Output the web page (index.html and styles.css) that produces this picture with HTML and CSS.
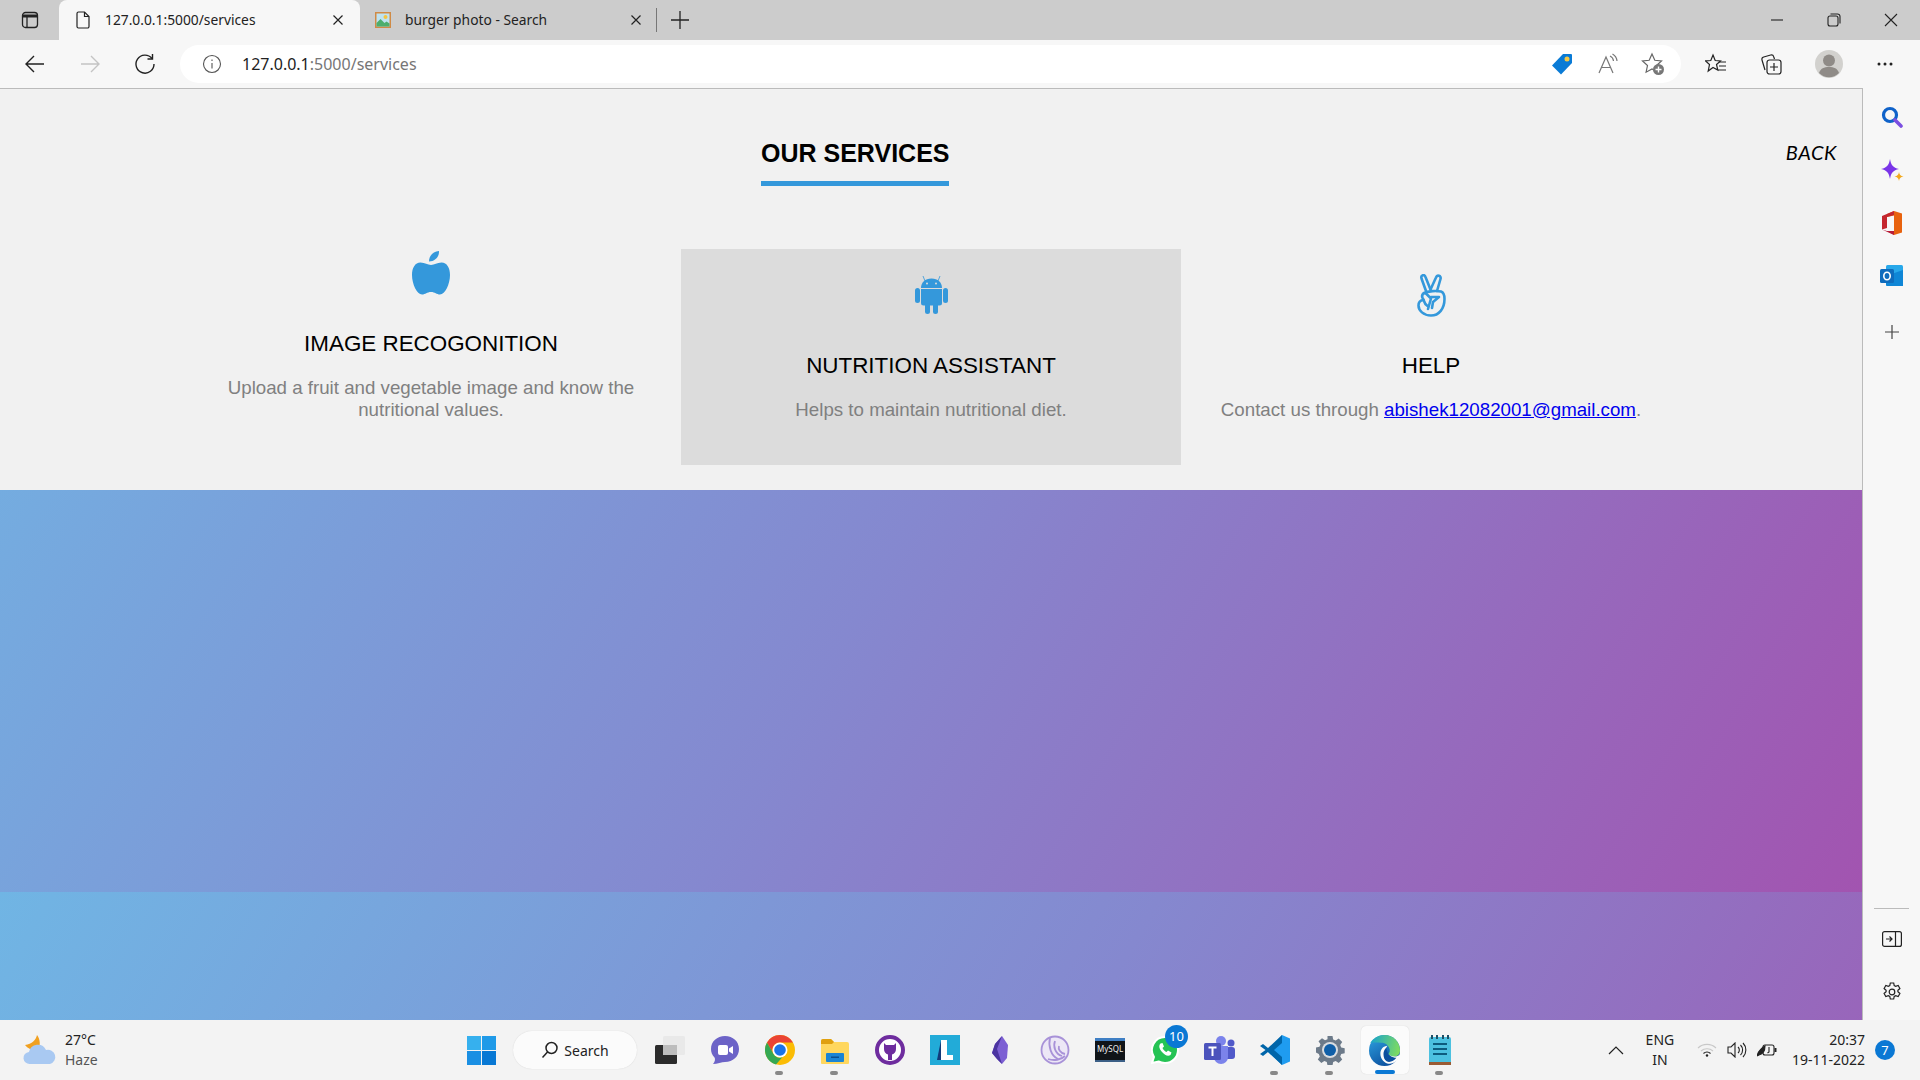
FILE: index.html
```html
<!DOCTYPE html>
<html lang="en">
<head>
    <meta charset="UTF-8">
    <meta name="viewport" content="width=device-width, initial-scale=1.0">
    <title>Our Services</title>
    <link rel="stylesheet" href="styles.css">
</head>
<body>
    <!-- tab strip -->
    <div class="tabstrip">
        <div class="tab-toggle">
            <svg width="18" height="18" viewBox="0 0 18 18" fill="none" stroke="#222" stroke-width="1.3"><rect x="1.5" y="1.5" width="15" height="15" rx="3"/><path d="M1.5 5h15" stroke-width="3"/><path d="M6 5v11"/></svg>
        </div>
        <div class="tab tab-active">
            <svg class="tab-icon" width="16" height="18" viewBox="0 0 16 18" fill="none" stroke="#222" stroke-width="1.2"><path d="M2 2.5a1.5 1.5 0 0 1 1.5-1.5h6L14 5.5v10a1.5 1.5 0 0 1-1.5 1.500h-9A1.5 1.5 0 0 1 2 15.500z"/><path d="M9.5 1v4.500H14"/></svg>
            <span class="tab-title">127.0.0.1:5000/services</span>
            <svg class="tab-close" width="12" height="12" viewBox="0 0 12 12" stroke="#222" stroke-width="1.2"><path d="M1.5 1.5l9 9M10.500 1.500l-9 9"/></svg>
        </div>
        <div class="tab">
            <svg class="tab-icon" width="18" height="18" viewBox="0 0 18 18"><rect x="1" y="1" width="16" height="16" fill="#d08a45"/><rect x="2.5" y="2.5" width="13" height="13" fill="#bfe3f2"/><circle cx="11.500" cy="6" r="2" fill="#f4c542"/><path d="M2.500 12l4-4 4 4 2-1.500 3 2v3h-13z" fill="#4cae6d"/></svg>
            <span class="tab-title">burger photo - Search</span>
            <svg class="tab-close" width="12" height="12" viewBox="0 0 12 12" stroke="#222" stroke-width="1.2"><path d="M1.500 1.500l9 9M10.500 1.500l-9 9"/></svg>
        </div>
        <div class="tab-sep"></div>
        <svg class="tab-new" width="18" height="18" viewBox="0 0 18 18" stroke="#222" stroke-width="1.3"><path d="M9 0v18M0 9h18"/></svg>
        <div class="window-btns">
            <svg width="14" height="14" viewBox="0 0 14 14" stroke="#222" stroke-width="1.1"><path d="M1 7h12"/></svg>
            <svg width="14" height="14" viewBox="0 0 14 14" fill="none" stroke="#222" stroke-width="1.1"><rect x="1" y="3" width="10" height="10" rx="2"/><path d="M3.500 1h7a2.500 2.500 0 0 1 2.500 2.500v7"/></svg>
            <svg width="14" height="14" viewBox="0 0 14 14" stroke="#222" stroke-width="1.1"><path d="M1 1l12 12M13 1L1 13"/></svg>
        </div>
    </div>

    <!-- address bar row -->
    <div class="toolbar">
        <svg class="nav-btn" width="22" height="22" viewBox="0 0 22 22" fill="none" stroke="#222" stroke-width="1.4"><path d="M20 11H2M10 3l-8 8 8 8"/></svg>
        <svg class="nav-btn" width="22" height="22" viewBox="0 0 22 22" fill="none" stroke="#c4c4c4" stroke-width="1.4"><path d="M2 11h18M12 3l8 8-8 8"/></svg>
        <svg class="nav-btn" width="22" height="22" viewBox="0 0 22 22" fill="none" stroke="#222" stroke-width="1.4"><path d="M18 5.500A9 9 0 1 0 20 11"/><path d="M18.500 1v5h-5"/></svg>
        <div class="addressbar">
            <svg class="addr-info" width="20" height="20" viewBox="0 0 20 20" fill="none" stroke="#555" stroke-width="1.100"><circle cx="10" cy="10" r="8.500"/><path d="M10 9v5.500M10 5.500v1.500"/></svg>
            <span class="addr-url"><span class="addr-host">127.0.0.1</span>:5000/services</span>
            <svg class="addr-btn addr-tag" width="22" height="22" viewBox="0 0 22 22"><path d="M12 1h8a1 1 0 0 1 1 1v8L10 21.500 1 12.500z" fill="#0a7bd6"/><circle cx="16" cy="6" r="2.500" fill="#f6c945"/></svg>
            <svg class="addr-btn" width="22" height="22" viewBox="0 0 22 22" fill="none" stroke="#777" stroke-width="1.200"><path d="M2 20L9 4l7 16M4.500 14.500h9"/><path d="M13 3a6 6 0 0 1 3.500 5M15.500 1a9 9 0 0 1 4.500 7"/></svg>
            <svg class="addr-btn" width="24" height="24" viewBox="0 0 24 24"><path d="M11 2l2.800 6.300 6.700.7-5 4.500 1.400 6.700L11 17l-5.900 3.200 1.400-6.700-5-4.500 6.700-.7z" fill="none" stroke="#666" stroke-width="1.200"/><circle cx="17.500" cy="17.500" r="5.500" fill="#777"/><path d="M17.500 14.500v6M14.500 17.500h6" stroke="#fff" stroke-width="1.400"/></svg>
        </div>
        <div class="toolbar-right">
            <svg width="22" height="22" viewBox="0 0 22 22" fill="none" stroke="#222" stroke-width="1.200"><path d="M8 2l2.200 5.500 5.300.4-4 3.600 1.300 5.500L8 14.500 3.200 18l1.300-6.500-4-3.600 5.300-.4z"/><path d="M14 9h7M14 13h7M13 17h8"/></svg>
            <svg width="22" height="22" viewBox="0 0 22 22" fill="none" stroke="#222" stroke-width="1.200"><rect x="7" y="7" width="14" height="14" rx="2.500"/><path d="M14 10v8M10 14h8"/><path d="M5 17L2 7a2.500 2.500 0 0 1 1.700-3l7-2a2.500 2.500 0 0 1 3 1.700l.8 2.300"/></svg>
            <svg width="28" height="28" viewBox="0 0 28 28"><circle cx="14" cy="14" r="14" fill="#d2d1ce"/><circle cx="14" cy="10.500" r="6" fill="#8f8b87"/><path d="M4 23c1.500-4.500 5-6 10-6s8.500 1.500 10 6a14 14 0 0 1-20 0z" fill="#8f8b87"/></svg>
            <svg width="18" height="6" viewBox="0 0 18 6" fill="#222"><circle cx="3" cy="3" r="1.500"/><circle cx="9" cy="3" r="1.500"/><circle cx="15" cy="3" r="1.500"/></svg>
        </div>
    </div>

    <div class="browser-body">
        <main class="page">
            <section class="services">
                <div class="services-head">
                    <h2 class="services-title">OUR SERVICES</h2>
                    <a class="back-link">BACK</a>
                </div>
                <div class="cards">
                    <div class="card">
                        <div class="card-icon">
                            <svg width="38" height="44" viewBox="0 0 38 44" fill="#3498db"><path d="M19 14C15.500 14 13 11.500 8.500 11.500 3 11.500 0 17 0 24c0 9 5 19.500 10 19.500 3.500 0 5-2.500 9-2.500s5.500 2.500 9 2.500c5 0 10-10.500 10-19.500 0-7-3-12.500-8.500-12.500C25 11.500 22.500 14 19 14z"/><path d="M17 10.500C17 5 21 .5 27 0c.5 5.500-4 10.500-10 10.500z"/></svg>
                        </div>
                        <h3 class="card-title">IMAGE RECOGONITION</h3>
                        <p class="card-text">Upload a fruit and vegetable image and know the nutritional values.</p>
                    </div>
                    <div class="card card-hover">
                        <div class="card-icon">
                            <svg width="33" height="38" viewBox="0 0 33 38" fill="#3498db"><path d="M6 12C6 6.500 10 2.500 16.500 2.500S27 6.500 27 12z"/><path d="M6 13h21v14a2.500 2.500 0 0 1-2.500 2.500h-16A2.500 2.500 0 0 1 6 27z"/><rect x="0" y="12" width="5" height="15" rx="2.500"/><rect x="28" y="12" width="5" height="15" rx="2.500"/><rect x="10" y="27" width="5" height="11" rx="2.500"/><rect x="18" y="27" width="5" height="11" rx="2.500"/><path d="M10 5L8 0M23 5l2-5" stroke="#3498db" stroke-width=".8"/><circle cx="12" cy="7.500" r="1" fill="#dcdcdc"/><circle cx="21" cy="7.500" r="1" fill="#dcdcdc"/></svg>
                        </div>
                        <h3 class="card-title">NUTRITION ASSISTANT</h3>
                        <p class="card-text">Helps to maintain nutritional diet.</p>
                    </div>
                    <div class="card">
                        <div class="card-icon">
                            <svg width="30" height="43" viewBox="0 0 30 43" fill="none" stroke="#3498db" stroke-width="2.600" stroke-linecap="round" stroke-linejoin="round"><path d="M10 17L5.500 4.500C4.500 1 8.500 0 9.500 3L14.500 15.500"/><path d="M14.500 15.500L20 3.500C21 .5 25.500 1.500 24.500 5L21 17"/><path d="M8 19c4-2 13-2.500 17-1.500 3 1 3.500 3.500 3.500 7.500 0 9.500-5.500 16.500-13.500 16.500-7.500 0-12.500-5-12.500-10 0-3 1.500-5 4.500-5.500"/><path d="M7.500 25.500C4.500 22 7 17.500 10.500 20L15 24.500 12 35"/><path d="M15 23h8l-6 5-1 6"/><path d="M7.500 26c1 3 2.500 5 4 6"/></svg>
                        </div>
                        <h3 class="card-title">HELP</h3>
                        <p class="card-text">Contact us through <a class="mail-link" href="mailto:abishek12082001@gmail.com">abishek12082001@gmail.com</a>.</p>
                    </div>
                </div>
            </section>
        </main>

        <aside class="sidebar">
            <div class="side-item">
                <svg width="22" height="22" viewBox="0 0 22 22" fill="none"><circle cx="9" cy="9" r="6.500" stroke="#0f62c9" stroke-width="3.200"/><path d="M14 14l6 6" stroke="#7b4fe0" stroke-width="3.600" stroke-linecap="round"/></svg>
            </div>
            <div class="side-item">
                <svg width="24" height="24" viewBox="0 0 24 24"><path d="M10 1c1 6 3 8.500 9 10-6 1.500-8 4-9 10-1-6-3-8.500-9-10 6-1.500 8-4 9-10z" fill="#7a34e8"/><path d="M19 14c.4 2.800 1.500 4 4.500 4.500-3 .5-4.100 1.700-4.500 4.500-.4-2.800-1.500-4-4.500-4.500 3-.5 4.100-1.700 4.500-4.500z" fill="#f2a91e"/></svg>
            </div>
            <div class="side-item">
                <svg width="20" height="24" viewBox="0 0 20 24"><path d="M12 0l8 2.500v19L12 24 5 20h7V4.500L5 6V3z" fill="#e8620e"/><path d="M12 0L0 5v13.500L5 17V6l7-2z" fill="#c4262e"/><path d="M0 18.500L12 24v-4H5z" fill="#b81c3a"/></svg>
            </div>
            <div class="side-item">
                <svg width="24" height="22" viewBox="0 0 24 22"><rect x="6" y="0" width="17" height="21" rx="1.500" fill="#28a8ea"/><path d="M6 11l17-6v16H7.500A1.500 1.500 0 0 1 6 19.500z" fill="#0f86d6"/><rect x="0" y="4" width="14" height="14" rx="1.500" fill="#0f6cbd"/><ellipse cx="7" cy="11" rx="3.200" ry="3.800" fill="none" stroke="#fff" stroke-width="1.600"/></svg>
            </div>
            <div class="side-item side-plus">
                <svg width="16" height="16" viewBox="0 0 16 16" stroke="#444" stroke-width="1.200"><path d="M8 1v14M1 8h14"/></svg>
            </div>
            <div class="side-spacer"></div>
            <div class="side-line"></div>
            <div class="side-item">
                <svg width="20" height="16" viewBox="0 0 20 16" fill="none" stroke="#222" stroke-width="1.200"><rect x=".6" y=".6" width="18.800" height="14.800" rx="2"/><path d="M13.500 .6v14.800M4 8h6M7.500 5.500L10 8l-2.500 2.500"/></svg>
            </div>
            <div class="side-item">
                <svg width="20" height="20" viewBox="0 0 20 20" fill="none" stroke="#222" stroke-width="1.200"><circle cx="10" cy="10" r="2.800"/><path d="M8.300 1h3.400l.5 2.600 1.500.8 2.500-.9 1.700 3-2 1.700v1.600l2 1.700-1.700 3-2.500-.9-1.500.8-.5 2.600H8.300l-.5-2.600-1.500-.8-2.500.9-1.700-3 2-1.700V8.200l-2-1.700 1.700-3 2.500.9 1.500-.8z"/></svg>
            </div>
        </aside>
    </div>

    <!-- windows taskbar -->
    <footer class="taskbar">
        <div class="weather">
            <svg width="34" height="30" viewBox="0 0 34 30"><path d="M14 0c-1 5-5 9-12 10 3 4 8 6 13 5 3-5 2-11-1-15z" fill="#f0a020"/><path d="M7 29a6 6 0 0 1-1-12 9 9 0 0 1 17-2 7 7 0 0 1 4 14z" fill="#a9c9f2"/></svg>
            <div class="weather-text">
                <div class="weather-temp">27°C</div>
                <div class="weather-desc">Haze</div>
            </div>
        </div>
        <svg class="start-btn" width="29" height="29" viewBox="0 0 29 29"><rect width="14" height="14" fill="#36b0ee"/><rect x="15" width="14" height="14" fill="#1f9ae8"/><rect y="15" width="14" height="14" fill="#1a8fe3"/><rect x="15" y="15" width="14" height="14" fill="#0878d4"/></svg>
        <div class="task-search">
            <svg width="18" height="18" viewBox="0 0 18 18" fill="none" stroke="#222" stroke-width="1.500"><circle cx="10.500" cy="7" r="5.500"/><path d="M6.500 11L1.500 16.500"/></svg>
            <span>Search</span>
        </div>
        <svg class="task-view" width="30" height="28" viewBox="0 0 30 28"><rect x="0" y="9" width="22" height="19" rx="1.500" fill="#2b2b2b"/><rect x="8" y="0" width="22" height="19" rx="1.500" fill="#e9e9e9"/><rect x="8" y="9" width="14" height="10" fill="#bdbdbd"/></svg>
        <div class="task-apps">
            <div class="task-app">
                <svg width="30" height="30" viewBox="0 0 30 30"><path d="M15 1c8 0 14 5.500 14 13s-6 13-14 13c-3 0-8 2-12 2 2-2 2.500-5 1.500-6.500C2 20 1 17 1 14 1 6.500 7 1 15 1z" fill="#6c63c7"/><rect x="8" y="10" width="10" height="10" rx="2" fill="#fff"/><path d="M19 13.500l4-2.500v8l-4-2.500z" fill="#fff"/></svg>
            </div>
            <div class="task-app has-dot">
                <svg width="30" height="30" viewBox="0 0 30 30"><circle cx="15" cy="15" r="15" fill="#fbbc04"/><path d="M15 0a15 15 0 0 1 13 7.500H15A7.500 7.500 0 0 0 8.500 19L2 7.500A15 15 0 0 1 15 0z" fill="#ea4335"/><path d="M2 7.500L8.500 19A7.500 7.500 0 0 0 17.500 22L11 29.500A15 15 0 0 1 2 7.500z" fill="#34a853"/><circle cx="15" cy="15" r="7.500" fill="#fff"/><circle cx="15" cy="15" r="5.800" fill="#1a73e8"/></svg>
            </div>
            <div class="task-app has-dot">
                <svg width="30" height="30" viewBox="0 0 30 30"><path d="M1 6a2 2 0 0 1 2-2h8l3 3h13a2 2 0 0 1 2 2v19a1 1 0 0 1-1 1H2a1 1 0 0 1-1-1z" fill="#ffd75e"/><path d="M1 6a2 2 0 0 1 2-2h8l3 3-2 2H1z" fill="#e0a00f"/><rect x="6" y="18" width="18" height="9" rx="1" fill="#1b84d4"/><rect x="11" y="21.500" width="8" height="1.500" fill="#0a4f8f"/></svg>
            </div>
            <div class="task-app">
                <svg width="30" height="30" viewBox="0 0 30 30"><circle cx="15" cy="15" r="13" fill="#fff" stroke="#6e2c9e" stroke-width="4"/><path d="M9 8l2 2h8l2-2v6a6 6 0 0 1-4 5.500V25h-4v-5.500A6 6 0 0 1 9 14z" fill="#6e2c9e"/></svg>
            </div>
            <div class="task-app">
                <svg width="30" height="30" viewBox="0 0 30 30"><rect width="30" height="30" fill="#22abd8"/><path d="M11 5h6v15h6v5H11z" fill="#fff"/><path d="M11 5L7 25h4z" fill="#123a7a"/></svg>
            </div>
            <div class="task-app">
                <svg width="20" height="30" viewBox="0 0 20 30"><path d="M12 1l6 9-1 13-5 6-5-5-5-6 3-9z" fill="#7c5fd3"/><path d="M12 1L7 14l5 15-5-5-5-6 3-9z" fill="#4b34a0"/></svg>
            </div>
            <div class="task-app">
                <svg width="30" height="30" viewBox="0 0 30 30" fill="none" stroke="#a892d8" stroke-width="1.800"><circle cx="15" cy="15" r="13.500" fill="#ece7f6"/><path d="M10 3c-2 8 1 18 8 21M15 6c-2 5 0 13 7 15M19 11c-1 3 1 7 6 8M8 24c6 2 13 1 17-3"/></svg>
            </div>
            <div class="task-app">
                <svg width="30" height="24" viewBox="0 0 30 24"><rect width="30" height="24" rx="1" fill="#101418"/><rect width="30" height="3" fill="#3f7fc4"/><rect y="22" width="30" height="2" fill="#3b5f86"/><text class="mysql-label" x="2" y="14">MySQL</text></svg>
            </div>
            <div class="task-app task-app-badge">
                <svg width="28" height="30" viewBox="0 0 28 30"><path d="M14 2a13 13 0 0 1 0 26c-2.500 0-4.500-.5-6.500-1.500L1 28l2-6A13 13 0 0 1 14 2z" fill="#25c354" stroke="#fff" stroke-width="2"/><path d="M9.500 8.500c-2 2-1.500 5 1.500 8.500s6 4.500 8.500 3l1-2.500-3.500-2-1.500 1.500c-1.500-.5-3-2-4-4l1.500-1.500L11.500 8z" fill="#fff"/></svg>
                <span class="app-badge">10</span>
            </div>
            <div class="task-app">
                <svg width="32" height="30" viewBox="0 0 32 30"><circle cx="27" cy="8" r="3.500" fill="#5059c9"/><rect x="21" y="12" width="10" height="12" rx="3" fill="#5059c9"/><circle cx="17" cy="6" r="5" fill="#7b83eb"/><path d="M10 11h14v11a7 7 0 0 1-14 0z" fill="#7b83eb"/><rect y="8" width="17" height="17" rx="1.500" fill="#4b53bc"/><path d="M4.500 12.500h8M8.500 12.500V21" stroke="#fff" stroke-width="2"/></svg>
            </div>
            <div class="task-app has-dot">
                <svg width="30" height="30" viewBox="0 0 30 30"><path d="M22 0l8 3.500v23L22 30 8 17z" fill="#1f9cf0"/><path d="M22 0L8 13 3 9 0 11l5.500 4L0 19l3 2 5-4 14 13V22l-8-7 8-7z" fill="#0065a9"/></svg>
            </div>
            <div class="task-app has-dot">
                <svg width="30" height="30" viewBox="0 0 30 30"><path d="M12.500 1h5l.7 3.500 2.500 1 3-2 3.500 3.500-2 3 1 2.500 3.500.7v5l-3.500.7-1 2.500 2 3-3.500 3.500-3-2-2.500 1-.7 3.500h-5l-.7-3.500-2.500-1-3 2-3.500-3.500 2-3-1-2.500L1 17.500v-5l3.500-.7 1-2.500-2-3L7 3.300l3 2 2.500-1z" fill="#6c7a89"/><circle cx="15" cy="15" r="8" fill="#d9dde1"/><circle cx="15" cy="15" r="6" fill="#0f5fa8"/></svg>
            </div>
            <div class="task-app task-app-active">
                <svg width="31" height="31" viewBox="0 0 30 30">
                    <defs>
                        <linearGradient id="edgeBlue" x1="0" y1="0" x2="0.6" y2="1"><stop offset="0" stop-color="#2fa5e3"/><stop offset="1" stop-color="#0b4f9e"/></linearGradient>
                        <linearGradient id="edgeGreen" x1="0" y1="0.4" x2="1" y2="0.6"><stop offset="0" stop-color="#1ba5c9"/><stop offset="1" stop-color="#7fdc5f"/></linearGradient>
                    </defs>
                    <circle cx="15" cy="15" r="15" fill="url(#edgeBlue)"/>
                    <path d="M1 8C4 3 9 0 15 0c9 0 15 7 15 15 0 4.500-4 6.500-8 6.500-3 0-5-1-5-2 2-1 3.500-3 3-5.500-1-4-4-6.500-8-6.500C8 7.500 3 7 1 8z" fill="url(#edgeGreen)"/>
                    <path d="M11 18c0-4 3-7.500 7-7.500-2 1.500-2 5 0 7.500 3 3 7 4 12 1-1 3-2 5-3.500 6.500-3 2-6 3-9 2-4-1.500-6.500-5-6.500-9.500z" fill="#fbfbfb"/>
                    <path d="M14 18.500c0-2.500 1-5 3-6.500 0 3 1 6 3.500 8 2 1.500 4 2 6 2-2.500 3-6 5-9.500 3.500-2-1-3-4-3-7z" fill="#0b4f9e"/>
                </svg>
            </div>
            <div class="task-app has-dot">
                <svg width="24" height="32" viewBox="0 0 24 32"><rect x="1" y="3" width="22" height="27" rx="2" fill="#4cc1e0"/><rect x="1" y="28" width="22" height="3" fill="#9a5b34"/><path d="M5 10h14M5 15h14M5 20h14" stroke="#0d5c7e" stroke-width="2"/><path d="M4 1v4M9 1v4M15 1v4M20 1v4" stroke="#1c4f66" stroke-width="2"/></svg>
            </div>
        </div>
        <div class="tray">
            <svg class="tray-chevron" width="16" height="9" viewBox="0 0 16 9" fill="none" stroke="#222" stroke-width="1.200"><path d="M1 8l7-7 7 7"/></svg>
            <div class="tray-lang">ENG<br>IN</div>
            <svg class="tray-wifi" width="20" height="14" viewBox="0 0 20 14" fill="none" stroke="#c8c8c8" stroke-width="1.100"><path d="M1 5a13 13 0 0 1 18 0M4 8a9 9 0 0 1 12 0"/><path d="M6.500 10.500a5 5 0 0 1 7 0" stroke="#222"/><circle cx="10" cy="12.500" r="1.200" fill="#222" stroke="none"/></svg>
            <svg class="tray-vol" width="20" height="16" viewBox="0 0 20 16" fill="none" stroke="#222" stroke-width="1.100"><path d="M1 5h3l4-4v14l-4-4H1z"/><path d="M11 5a4 4 0 0 1 0 6M13.500 3a7 7 0 0 1 0 10M16 1a10 10 0 0 1 0 14"/></svg>
            <svg class="tray-batt" width="20" height="14" viewBox="0 0 20 14" fill="none" stroke="#222" stroke-width="1.100"><rect x="6" y="2" width="11" height="10" rx="2"/><path d="M18.500 5v4" stroke-width="2"/><path d="M0 13c1-4 3-7 8-10 0 5-2 8-6 9z" fill="#222"/><path d="M12 4v5l-1.500 1"/></svg>
            <div class="tray-clock">20:37<br>19-11-2022</div>
            <div class="tray-badge">7</div>
        </div>
    </footer>
</body>
</html>
```

FILE: styles.css
```css
* {
    box-sizing: border-box;
}
html, body {
    height: 100%;
}
body {
    margin: 0;
    font-family: "Noto Sans", sans-serif;
    color: #222;
    background: #f3f3f3;
    display: flex;
    flex-direction: column;
    overflow: hidden;
}

/* tab strip */
.tabstrip {
    height: 40px;
    flex: none;
    display: flex;
    align-items: center;
    background-color: #cccccc;
}
.tab-toggle {
    width: 59px;
    height: 40px;
    display: flex;
    align-items: center;
    justify-content: center;
}
.tab {
    width: 298px;
    height: 40px;
    display: flex;
    align-items: center;
    font-size: 13.8px;
    padding: 0 16px 0 14px;
}
.tab-active {
    width: 301px;
    background-color: #f7f7f7;
    border-radius: 8px 8px 0 0;
    padding-left: 16px;
}
.tab-icon {
    flex: none;
    margin-right: 13px;
}
.tab-active .tab-icon {
    margin-right: 14px;
}
.tab-title {
    flex: 1;
    white-space: nowrap;
    padding-bottom: 2px;
}
.tab-close {
    flex: none;
}
.tab-sep {
    width: 1px;
    height: 24px;
    margin-left: -2px;
    background-color: #777;
}
.tab-new {
    margin-left: 14px;
}
.window-btns {
    margin-left: auto;
    padding-right: 22px;
    display: flex;
    gap: 43px;
}

/* toolbar */
.toolbar {
    height: 48px;
    flex: none;
    display: flex;
    align-items: center;
    background-color: #f7f7f7;
    padding-left: 24px;
}
.nav-btn {
    margin-right: 33px;
}
.addressbar {
    width: 1501px;
    height: 38px;
    margin-left: -9px;
    background-color: #fff;
    border-radius: 19px;
    display: flex;
    align-items: center;
    padding: 0 16px 0 22px;
}
.addr-info {
    flex: none;
    margin-right: 20px;
}
.addr-url {
    flex: 1;
    font-size: 16px;
    color: #767676;
}
.addr-host {
    color: #222;
}
.addr-btn {
    margin-left: 22px;
}
.addr-tag {
    position: relative;
    left: -2px;
}
.toolbar-right {
    flex: 1;
    display: flex;
    align-items: center;
    gap: 33px;
    padding-left: 24px;
}

/* main area */
.browser-body {
    flex: 1;
    min-height: 0;
    display: flex;
}
.page {
    flex: 1;
    border-top: 1px solid #bbb;
    border-right: 1px solid #bbb;
    background: linear-gradient(120deg, #70b5e4, #8588cf 50%, #a254b0);
    background-size: 100% 803px;
    font-family: "Liberation Sans", Arial, sans-serif;
}
.services {
    height: 401px;
    background-color: #f1f1f1;
    padding-top: 49px;
}
.services-head {
    display: flex;
    justify-content: space-between;
    align-items: flex-start;
    padding: 0 25px 0 761px;
}
.services-title {
    margin: 0;
    font-size: 25px;
    line-height: 30px;
    padding-bottom: 13px;
    color: #000;
    border-bottom: 5px solid #3498db;
}
.back-link {
    font-family: "Lato", sans-serif;
    font-style: italic;
    font-size: 20px;
    letter-spacing: 0.6px;
    line-height: 28px;
    color: #000;
}
.cards {
    display: flex;
    justify-content: center;
    margin-top: 63px;
}
.card {
    width: 500px;
    height: 216px;
    padding: 0 30px 44px;
    display: flex;
    flex-direction: column;
    justify-content: flex-end;
    align-items: center;
    text-align: center;
}
.card-hover {
    background-color: #dcdcdc;
}
.card-icon {
    height: 44px;
    display: flex;
    align-items: center;
    justify-content: center;
    margin-bottom: 35px;
}
.card-title {
    margin: 0 0 19px;
    font-size: 22.4px;
    line-height: 28px;
    font-weight: normal;
    color: #000;
}
.card-text {
    margin: 0;
    font-size: 18.72px;
    line-height: 22px;
    color: #808080;
}
.mail-link {
    color: #0000ee;
}

/* edge sidebar */
.sidebar {
    width: 57px;
    flex: none;
    background-color: #f7f7f7;
    display: flex;
    flex-direction: column;
    align-items: center;
    padding: 2px 0;
}
.side-item {
    height: 53px;
    flex: none;
    display: flex;
    align-items: center;
    justify-content: center;
}
.side-plus {
    margin-top: 3px;
}
.side-spacer {
    flex: 1;
}
.side-line {
    width: 35px;
    height: 1px;
    background-color: #bbb;
    margin-bottom: 3px;
}

/* taskbar */
.taskbar {
    height: 60px;
    flex: none;
    display: flex;
    align-items: center;
    background-color: #f3f3f3;
    padding-left: 23px;
    font-size: 14px;
}
.weather {
    width: 444px;
    display: flex;
    align-items: center;
}
.weather-text {
    margin-left: 8px;
    line-height: 20px;
    font-size: 14px;
}
.weather-desc {
    color: #555;
}
.start-btn {
    flex: none;
}
.task-search {
    width: 124px;
    height: 38px;
    margin-left: 17px;
    border-radius: 19px;
    background-color: #fbfbfb;
    box-shadow: 0 0 1px #ccc;
    display: flex;
    align-items: center;
    justify-content: center;
    gap: 5px;
    font-size: 14px;
}
.task-view {
    flex: none;
    margin-left: 18px;
}
.task-apps {
    display: flex;
    margin-left: 12px;
}
.task-app {
    width: 55px;
    height: 48px;
    position: relative;
    display: flex;
    align-items: center;
    justify-content: center;
}
.has-dot::after {
    content: "";
    position: absolute;
    left: 23px;
    bottom: -1px;
    width: 8px;
    height: 4px;
    border-radius: 2px;
    background-color: #888;
}
.task-app-active {
    width: 48px;
    margin: 0 3.5px;
    background-color: #fbfbfb;
    border-radius: 5px;
    box-shadow: 0 0 1px #ccc;
}
.task-app-active::after {
    content: "";
    position: absolute;
    left: 14px;
    bottom: 0;
    width: 20px;
    height: 4px;
    border-radius: 2px;
    background-color: #0a78d4;
}
.app-badge {
    position: absolute;
    top: -1px;
    right: 4px;
    width: 23px;
    height: 23px;
    border-radius: 50%;
    background-color: #0a78d4;
    color: #fff;
    font-size: 13px;
    line-height: 23px;
    text-align: center;
}
.mysql-label {
    font-family: "Noto Sans", sans-serif;
    font-size: 8px;
    fill: #eee;
}
.tray {
    margin-left: auto;
    display: flex;
    align-items: center;
    padding-right: 25px;
    color: #222;
}
.tray-lang {
    width: 50px;
    margin-left: 10px;
    text-align: center;
    line-height: 20px;
    font-size: 14px;
}
.tray-chevron {
    margin-right: 1px;
}
.tray-wifi {
    margin-left: 12px;
}
.tray-vol {
    margin-left: 10px;
}
.tray-batt {
    margin-left: 10px;
}
.tray-clock {
    margin-left: 15px;
    text-align: right;
    line-height: 20px;
    font-size: 14px;
}
.tray-badge {
    width: 20px;
    height: 20px;
    margin-left: 10px;
    border-radius: 50%;
    background-color: #0a78d4;
    color: #fff;
    font-size: 13px;
    line-height: 20px;
    text-align: center;
}
```
